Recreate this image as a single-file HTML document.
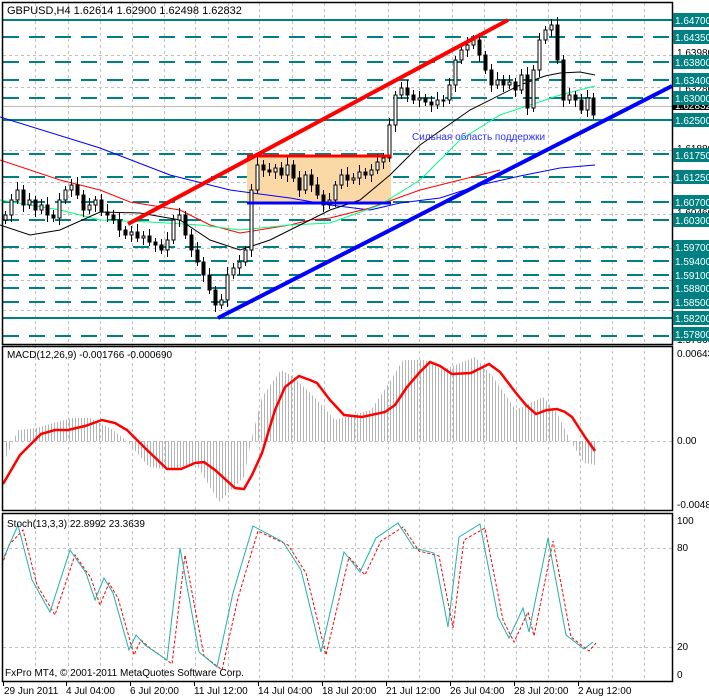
<!DOCTYPE html>
<html><head><meta charset="utf-8">
<style>
html,body{margin:0;padding:0;background:#fff;}
svg{display:block;font-family:"Liberation Sans",Tahoma,sans-serif;}
</style></head>
<body>
<svg id="s" width="709" height="698" viewBox="0 0 709 698" xmlns="http://www.w3.org/2000/svg">
<defs>
<pattern id="hist" width="3" height="4" patternUnits="userSpaceOnUse"><rect x="0" y="0" width="1" height="4" fill="#b4b4b4"/></pattern>
</defs>
<rect width="709" height="698" fill="#fff"/>
<!-- vertical grid -->
<g stroke="#c0c0c0" stroke-dasharray="3,3" stroke-width="1">
<path d="M35.5 3V681M68.5 3V681M100.5 3V681M132.5 3V681M164.5 3V681M195.5 3V681M228.5 3V681M259.5 3V681M292.5 3V681M324.5 3V681M355.5 3V681M388.5 3V681M419.5 3V681M452.5 3V681M484.5 3V681M516.5 3V681M548.5 3V681M580.5 3V681M612.5 3V681M644.5 3V681"/>
<path d="M3 55.5H672M3 87.5H672M3 150.5H672M3 182.5H672M3 214.5H672M3 248.5H672M3 280.5H672M3 310.5H672M3 441.5H672M3 548.5H672M3 647.5H672"/>
</g>
<path d="M3 106.5H672" stroke="#bcbcbc"/>
<!-- horizontal levels -->
<g stroke="#008080" stroke-width="2">
<path d="M3 20H672M3 120H672M3 318H672"/>
<path stroke-dasharray="16,10" d="M3 37H672M3 62H672M3 80H672M3 98H672M3 154H672M3 177H672M3 202H672M3 220H672M3 247H672M3 261H672M3 275H672M3 288H672M3 302H672M3 336H672"/>
</g>
<!-- orange box -->
<rect x="247" y="156" width="144" height="47" fill="#fbd9a6"/>
<!-- MAs -->
<polyline fill="none" stroke="#0000ff" stroke-width="1" points="0,117 100,148 170,175 230,190 290,198 330,205 370,210 400,203 440,198 480,185 520,176 560,168 595,165"/>
<polyline fill="none" stroke="#ff0000" stroke-width="1" points="0,160 60,180 100,190 130,202 180,210 210,225 240,233 290,225 310,220 330,218 370,208 420,190 460,180 500,170"/>
<polyline fill="none" stroke="#00ff80" stroke-width="1" points="0,200 60,210 100,220 150,222 200,225 240,230 290,225 330,223 380,205 420,180 460,140 500,115 530,105 560,95 595,86"/>
<polyline fill="none" stroke="#000" stroke-width="1" points="0,225 30,235 60,230 100,212 140,213 180,220 210,240 240,250 270,240 300,225 330,210 360,200 390,175 420,145 470,110 520,85 545,76 560,73 580,72 595,75"/>
<g id="candles"></g>
<!-- trend lines -->
<path d="M128 224L508 20" stroke="#ff0000" stroke-width="4"/>
<path d="M247 156H391" stroke="#ff0000" stroke-width="3"/>
<path d="M247 203H391" stroke="#0000ff" stroke-width="3"/>
<path d="M218 318L672 86" stroke="#0000ff" stroke-width="4"/>
<text x="412" y="140" font-size="10" fill="#3030ff">Сильная область поддержки</text>
<text x="7" y="14" font-size="11" fill="#000">GBPUSD,H4  1.62614 1.62900 1.62498 1.62832</text>
<!-- MACD -->
<polygon fill="url(#hist)" points="4,441 4,462 18,430 36,428 72,418 90,418 113,430 127,441 149,467 172,470 195,462 219,502 244,477 251,441 262,397 281,370 294,377 317,400 335,420 371,410 389,383 403,360 425,360 443,370 475,357 493,377 516,410 543,397 557,413 570,440 584,463 596,465 596,441"/>
<polyline fill="none" stroke="#ff0000" stroke-width="2.5" points="3,484 20,455 41,434 55,430 68,430 85,426 102,420 115,423 127,430 145,448 167,469 181,469 195,463 204,462 215,470 235,488 244,489 252,475 262,453 275,410 285,387 299,376 310,380 317,383 330,400 344,415 362,417 385,412 395,405 407,387 420,372 430,362 440,366 452,374 471,373 489,364 500,372 516,393 526,405 536,414 547,410 557,409 565,412 572,417 585,437 595,451"/>
<text x="7" y="358" font-size="10" fill="#000">MACD(12,26,9) -0.001766 -0.000690</text>
<!-- Stoch -->
<polyline fill="none" stroke="#ff0000" stroke-width="1" stroke-dasharray="3,2" points="2,565 9,545 23,530 37,585 55,615 75,555 91,578 100,605 109,583 118,598 134,655 141,640 150,648 172,664 185,555 204,656 222,670 238,598 258,531 288,545 306,573 326,655 349,557 365,575 381,541 403,527 419,551 439,556 453,628 464,540 485,528 503,620 514,642 528,612 534,636 553,541 571,637 589,651 596,643"/>
<polyline fill="none" stroke="#20b2aa" stroke-width="1" points="4,557 18,525 32,580 50,612 70,550 86,573 95,600 104,578 113,593 129,650 136,635 145,645 167,660 180,548 199,652 217,667 233,593 253,526 283,542 301,570 321,652 344,552 360,572 376,538 398,523 414,548 434,553 448,627 459,537 480,524 498,617 509,638 523,608 529,632 548,538 566,635 584,649 593,642"/>
<text x="7" y="527" font-size="10" fill="#000">Stoch(13,3,3) 22.8992 23.3639</text>
<text x="5" y="676" font-size="10" fill="#000">FxPro MT4, © 2001-2011 MetaQuotes Software Corp.</text>
<!-- panel borders -->
<g fill="none" stroke="#000" stroke-width="1.5">
<rect x="2.5" y="2.5" width="670" height="342"/>
<rect x="2.5" y="346.5" width="670" height="164"/>
<rect x="2.5" y="513.5" width="670" height="168"/>
</g>
<!-- right axis labels -->
<g font-size="10" fill="#000">
<text x="677" y="56">1.63980</text>
<text x="677" y="92">1.63280</text>
<text x="677" y="152">1.61880</text>
<text x="677" y="216">1.60460</text>
<text x="677" y="343">1.57660</text>
<text x="677" y="357">0.00643</text>
<text x="677" y="444">0.00</text>
<text x="677" y="508">-0.00484</text>
<text x="677" y="524">100</text>
<text x="677" y="551">80</text>
<text x="677" y="650">20</text>
<text x="677" y="678">0</text>
</g>
<rect x="673" y="101" width="36" height="9" fill="#000"/>
<text x="675" y="109" font-size="10" fill="#fff">1.62832</text>
<g font-size="10" fill="#fff">
<rect x="673" y="13" width="36" height="14" fill="#008080"/><text x="675" y="24">1.64700</text>
<rect x="673" y="30" width="36" height="14" fill="#008080"/><text x="675" y="41">1.64350</text>
<rect x="673" y="55" width="36" height="14" fill="#008080"/><text x="675" y="66">1.63800</text>
<rect x="673" y="73" width="36" height="14" fill="#008080"/><text x="675" y="84">1.63400</text>
<rect x="673" y="91" width="36" height="14" fill="#008080"/><text x="675" y="102">1.63000</text>
<rect x="673" y="113" width="36" height="14" fill="#008080"/><text x="675" y="124">1.62500</text>
<rect x="673" y="148" width="36" height="14" fill="#008080"/><text x="675" y="159">1.61750</text>
<rect x="673" y="170" width="36" height="14" fill="#008080"/><text x="675" y="181">1.61250</text>
<rect x="673" y="195" width="36" height="14" fill="#008080"/><text x="675" y="206">1.60700</text>
<rect x="673" y="213" width="36" height="14" fill="#008080"/><text x="675" y="224">1.60300</text>
<rect x="673" y="240" width="36" height="14" fill="#008080"/><text x="675" y="251">1.59700</text>
<rect x="673" y="254" width="36" height="14" fill="#008080"/><text x="675" y="265">1.59400</text>
<rect x="673" y="268" width="36" height="14" fill="#008080"/><text x="675" y="279">1.59100</text>
<rect x="673" y="281" width="36" height="14" fill="#008080"/><text x="675" y="292">1.58800</text>
<rect x="673" y="295" width="36" height="14" fill="#008080"/><text x="675" y="306">1.58500</text>
<rect x="673" y="311" width="36" height="14" fill="#008080"/><text x="675" y="322">1.58200</text>
<rect x="673" y="327" width="36" height="14" fill="#008080"/><text x="675" y="338">1.57800</text>
</g>
<!-- bottom axis -->
<g stroke="#000"><path d="M3.5 682V686M66.5 682V686M130.5 682V686M194.5 682V686M258.5 682V686M322.5 682V686M386.5 682V686M450.5 682V686M514.5 682V686M578.5 682V686"/></g>
<g font-size="10" fill="#000">
<text x="4" y="694">29 Jun 2011</text>
<text x="66" y="694">4 Jul 04:00</text>
<text x="130" y="694">6 Jul 20:00</text>
<text x="194" y="694">11 Jul 12:00</text>
<text x="258" y="694">14 Jul 04:00</text>
<text x="322" y="694">18 Jul 20:00</text>
<text x="386" y="694">21 Jul 12:00</text>
<text x="450" y="694">26 Jul 04:00</text>
<text x="514" y="694">28 Jul 20:00</text>
<text x="578" y="694">2 Aug 12:00</text>
</g>
</svg>
<script>
var c=[215,200,190,205,200,210,205,215,218,200,190,185,195,210,205,200,212,215,220,230,235,232,238,236,242,245,250,240,220,215,235,250,262,275,290,305,300,275,268,262,250,190,165,170,172,168,175,165,178,190,175,185,195,205,200,185,175,180,178,172,175,170,162,158,125,95,88,95,100,98,102,105,100,100,85,60,50,45,40,55,70,85,80,85,82,90,75,108,70,40,30,25,60,100,95,100,110,98,115];
var g=document.getElementById('candles'),ns='http://www.w3.org/2000/svg',o=c[0]+5,h='';
for(var i=0;i<c.length;i++){var x=5+6*i,cl=c[i],t=Math.min(o,cl),b=Math.max(o,cl),bh=Math.max(b-t,1);
h+='<path d="M'+(x+0.5)+' '+(t-4-(i*7%5))+'V'+(b+4+(i*3%6))+'" stroke="#000"/>';
h+='<rect x="'+(x-1)+'" y="'+t+'" width="3" height="'+bh+'" fill="'+(cl<o?'#fff':'#000')+'" stroke="#000" stroke-width="1"/>';o=cl;}
g.innerHTML=h;
</script>
</body></html>
